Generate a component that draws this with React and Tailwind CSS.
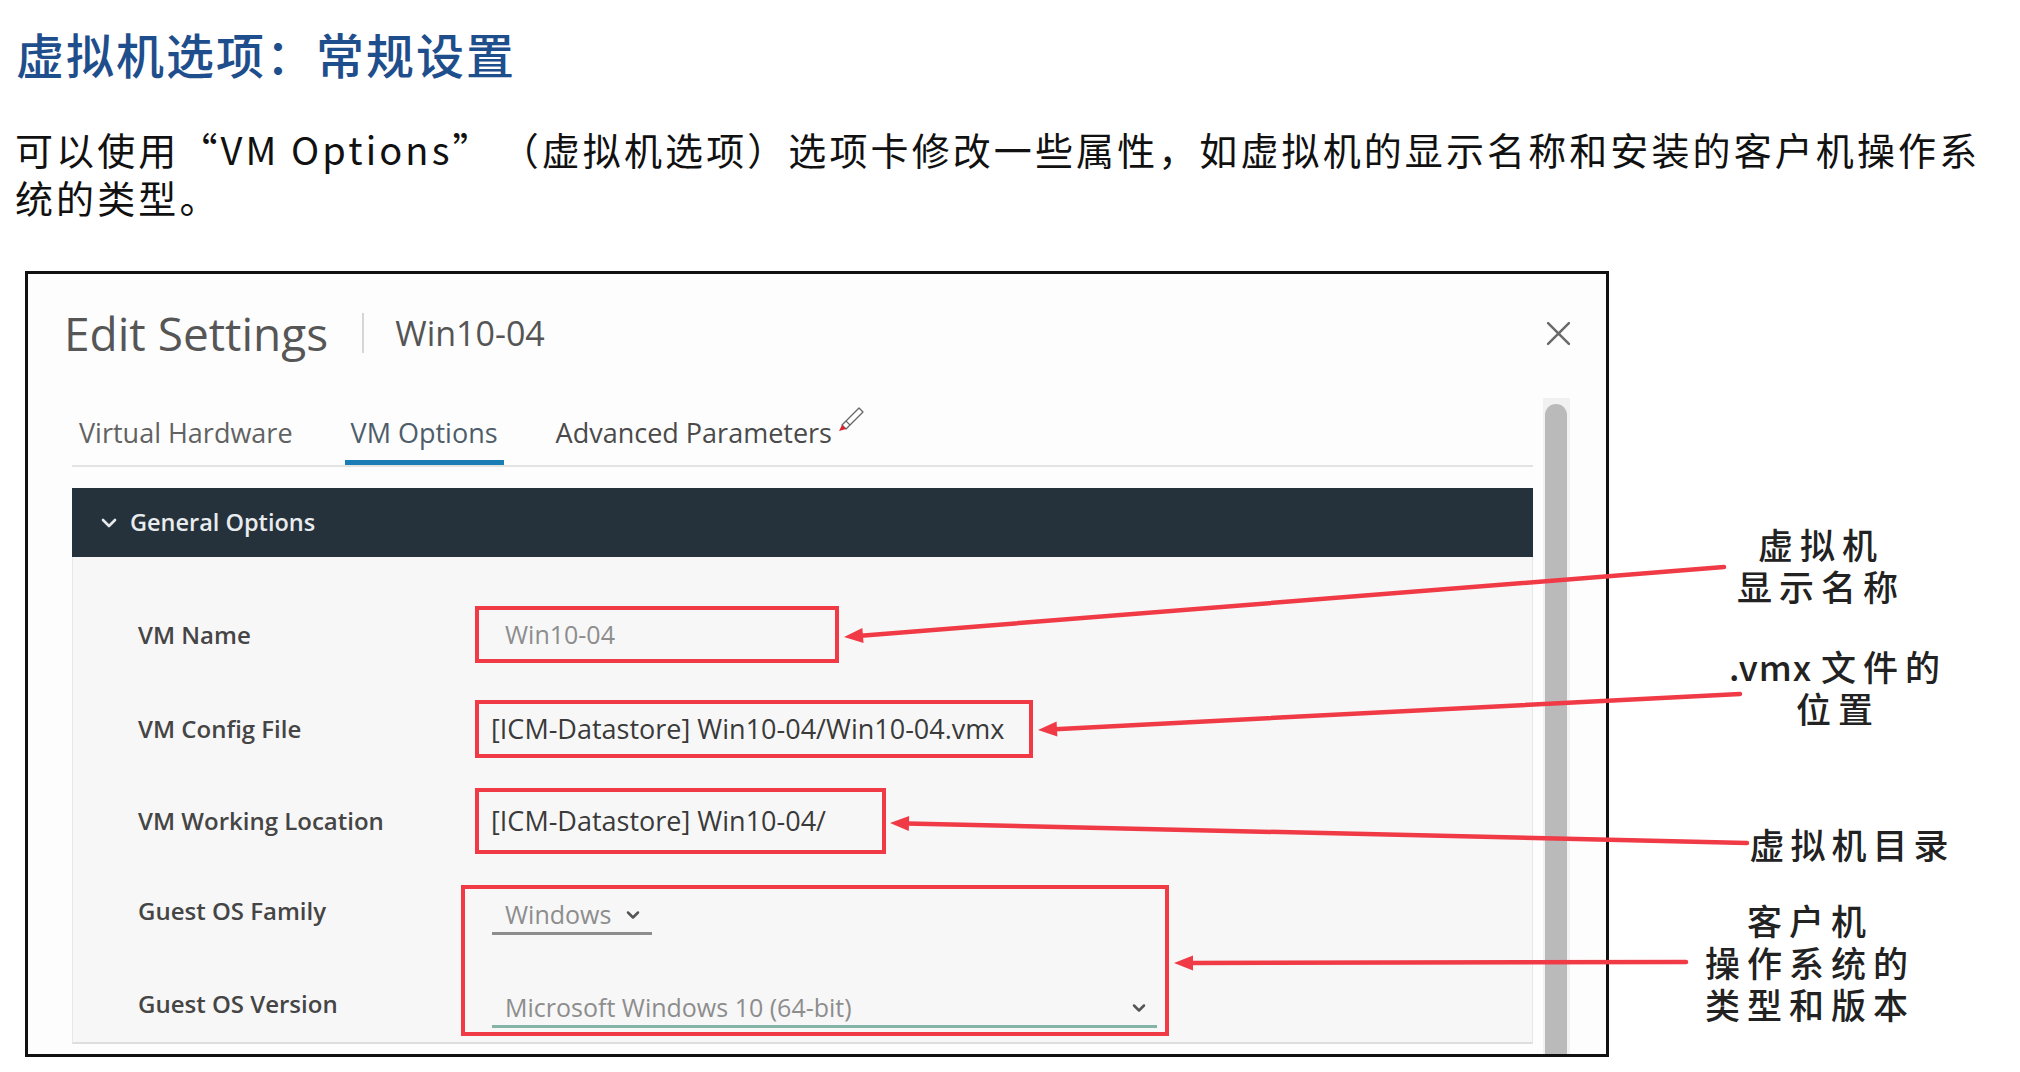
import React from 'react';

const RED = '#f03a46';

function Arrow({ x1, y1, x2, y2 }) {
  // line from (x1,y1) to the tip (x2,y2), head drawn at the tip
  const dx = x2 - x1;
  const dy = y2 - y1;
  const len = Math.sqrt(dx * dx + dy * dy);
  const ux = dx / len;
  const uy = dy / len;
  const bx = x2 - ux * 19;
  const by = y2 - uy * 19;
  const pts = `${x2},${y2} ${bx - uy * 7.5},${by + ux * 7.5} ${bx + uy * 7.5},${by - ux * 7.5}`;
  return (
    <g>
      <line x1={x1} y1={y1} x2={bx + ux * 2} y2={by + uy * 2} stroke={RED} strokeWidth="4.5" strokeLinecap="round" />
      <polygon points={pts} fill={RED} />
    </g>
  );
}

function Chevron({ className, color = '#555', width = 2.5 }) {
  return (
    <svg viewBox="0 0 14 10" className={className} fill="none">
      <path d="M2 2.5 L7 7.5 L12 2.5" stroke={color} strokeWidth={width} strokeLinecap="round" strokeLinejoin="round" />
    </svg>
  );
}

export default function App() {
  return (
    <div className="relative h-[1072px] w-[2020px] overflow-hidden bg-white font-['Noto_Sans_CJK_SC',sans-serif]">
      <h1 className="pl-[16px] pt-[24px] text-[48px] font-medium leading-[58px] tracking-[2px] text-[#1f4e8c]">
        虚拟机选项：常规设置
      </h1>
      <p className="mt-[43px] pl-[15px] text-[38px] leading-[48px] tracking-[3.1px] text-[#111]">
        可以使用“VM Options”<span className="inline-block w-[7px]" />（虚拟机选项）选项卡修改一些属性，如虚拟机的显示名称和安装的客户机操作系
        <br />
        统的类型。
      </p>

      <div className="mt-[50px] flex">
        {/* Edit Settings dialog */}
        <div className="ml-[25px] flex h-[786px] w-[1584px] flex-col border-[3px] border-[#111] bg-[#fdfdfd] font-['Open_Sans',sans-serif]">
          <div className="flex h-[118px] shrink-0 items-center pl-[36px] pr-[35px]">
            <span className="text-[46px] text-[#565656]">Edit Settings</span>
            <span className="ml-[34px] h-[40px] w-[2px] bg-[#d6d6d6]" />
            <span className="ml-[31px] text-[34px] text-[#555]">Win10-04</span>
            <svg viewBox="0 0 24 24" className="ml-auto h-[25px] w-[25px]" fill="none">
              <path d="M2 2 L22 22 M22 2 L2 22" stroke="#6a6a6a" strokeWidth="2.4" strokeLinecap="round" />
            </svg>
          </div>

          <div className="flex min-h-0 flex-1">
            <div className="ml-[44px] flex w-[1461px] flex-col">
              <div className="flex gap-[46px] border-b-[2px] border-[#e3e3e3] pl-[1px] text-[27px] leading-[30px]">
                <div className="px-[6px] pb-[17px] pt-[26px] text-[#626262]">Virtual Hardware</div>
                <div className="border-b-[5px] border-[#1b7db5] px-[6px] pb-[12px] pt-[26px] text-[#4e5d6a]">VM Options</div>
                <div className="px-[6px] pb-[17px] pt-[26px] text-[#4a4a4a]">Advanced Parameters</div>
              </div>

              <div className="mt-[21px] flex h-[69px] items-center bg-[#25323b] pl-[28px]">
                <Chevron className="h-[12px] w-[18px]" color="#e6e9ec" width={2.2} />
                <span className="ml-[12px] text-[23.5px] font-semibold text-[#e9ecef]">General Options</span>
              </div>

              <div className="flex h-[487px] flex-col border-x border-b-[2px] border-x-[#e8e8e8] border-b-[#dedede] bg-[#f7f7f7] pl-[65px] text-[24px] font-semibold text-[#454545]">
                <div className="mt-[49px] flex h-[57px] items-center">
                  <div className="w-[337px]">VM Name</div>
                  <div className="flex h-full w-[364px] items-center border-[4px] border-[#f03a46] pl-[26px] text-[25px] font-normal text-[#8d8d8d]">
                    Win10-04
                  </div>
                </div>

                <div className="mt-[37px] flex h-[58px] items-center">
                  <div className="w-[337px]">VM Config File</div>
                  <div className="flex h-full w-[558px] items-center border-[4px] border-[#f03a46] pl-[12px] text-[27px] font-normal text-[#3a3a3a]">
                    [ICM-Datastore] Win10-04/Win10-04.vmx
                  </div>
                </div>

                <div className="mt-[30px] flex h-[66px] items-center">
                  <div className="w-[337px]">VM Working Location</div>
                  <div className="flex h-full w-[411px] items-center border-[4px] border-[#f03a46] pl-[12px] text-[27px] font-normal text-[#3a3a3a]">
                    [ICM-Datastore] Win10-04/
                  </div>
                </div>

                <div className="mt-[31px] flex h-[151px]">
                  <div className="flex w-[323px] flex-col leading-[32px]">
                    <div className="mt-[10px]">Guest OS Family</div>
                    <div className="mt-[61px]">Guest OS Version</div>
                  </div>
                  <div className="flex h-full w-[708px] flex-col border-[4px] border-[#f03a46] pl-[27px] text-[25px] font-normal text-[#8d8d8d]">
                    <div className="mt-[9px] flex h-[37px] w-[160px] items-center border-b-[3px] border-[#8d8d8d] pl-[13px]">
                      <span>Windows</span>
                      <Chevron className="ml-[15px] h-[10px] w-[14px]" />
                    </div>
                    <div className="mt-[56px] flex h-[37px] w-[665px] items-center justify-between border-b-[3px] border-[#84b3a7] pl-[13px] pr-[11px]">
                      <span>Microsoft Windows 10 (64-bit)</span>
                      <Chevron className="h-[10px] w-[14px]" />
                    </div>
                  </div>
                </div>
              </div>
            </div>

            <div className="ml-[10px] mt-[6px] w-[27px] bg-[#f1f1f1] px-[2px] pt-[6px]">
              <div className="h-full w-[22px] rounded-t-full bg-[#bababa]" />
            </div>
          </div>
        </div>

        {/* callout labels */}
        <div className="flex flex-col text-center text-[35px] font-medium leading-[42px] tracking-[7px] text-[#222]">
          <div className="ml-[82px] mt-[252px] w-[260px]">
            虚拟机
            <br />
            显示名称
          </div>
          <div className="ml-[99px] mt-[38px] w-[260px]">
            <span className="tracking-[1px]">.vmx </span>文件的
            <br />
            位置
          </div>
          <div className="ml-[113px] mt-[94px] w-[260px] tracking-[6px]">虚拟机目录</div>
          <div className="ml-[71px] mt-[34px] w-[260px]">
            客户机
            <br />
            操作系统的
            <br />
            类型和版本
          </div>
        </div>
      </div>

      {/* annotation arrows and pen cursor */}
      <svg className="pointer-events-none absolute left-0 top-0 h-[1072px] w-[2020px]" viewBox="0 0 2020 1072">
        <Arrow x1={1724} y1={567} x2={844} y2={637} />
        <Arrow x1={1740} y1={694} x2={1038} y2={730} />
        <Arrow x1={1747} y1={843} x2={890} y2={823} />
        <Arrow x1={1686} y1={962} x2={1174} y2={963} />
        <g transform="translate(838,405)">
          <path d="M4 20 L21 3 L25 7 L8 24 Z" fill="#fff" stroke="#666" strokeWidth="1.3" strokeLinejoin="round" />
          <path d="M8 16 L12 20" stroke="#666" strokeWidth="1.1" />
          <path d="M4 20 L8 24 L1 26 Z" fill="#e0202c" />
        </g>
      </svg>
    </div>
  );
}
